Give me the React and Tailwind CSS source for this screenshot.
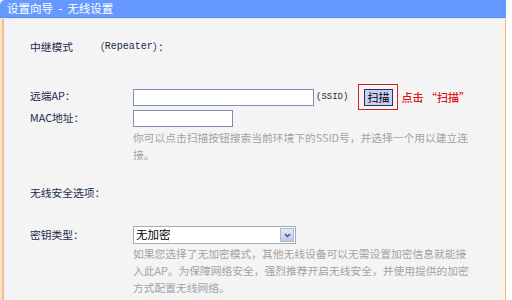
export default function App() {
  const cjk = { fontFamily: '"Noto Sans CJK SC", "Noto Sans", sans-serif' };
  const mono = { fontFamily: '"Liberation Mono", "Noto Sans CJK SC", monospace' };
  return (
    <div className="w-[512px] h-[300px] bg-white flex overflow-hidden" style={cjk}>
      <div className="w-[506px] h-[300px] flex flex-col">
        <div className="h-[18px] bg-[#6699ff] rounded-tl-[5px] border-b border-[#5a8cf0] flex items-center pl-[7px] text-white text-[11.5px] leading-none whitespace-pre">
          {"设置向导  -  无线设置"}
        </div>
        <div className="flex-1 flex bg-[#f4f4f4] border-t border-[#dfe8ff]">
          <div className="w-[2px] bg-[#fbe2c8]" />
          <div className="w-[2px] bg-[#f3bd86]" />
          <div className="w-[8px] bg-[#f1f3f8]" />
          <div className="flex-1 flex flex-col pl-[18px] text-[10.75px] text-[#1c2a4c]">
            <div className="h-[16px] mt-[20px] flex items-center leading-none">
              <span className="w-[64px]">中继模式</span>
              <span>（</span>
              <span className="text-[10px]" style={mono}>Repeater</span>
              <span>）：</span>
            </div>
            <div className="h-[26px] mt-[29px] flex items-center leading-none">
              <span className="w-[103px] mt-[-2px]">远端AP：</span>
              <div className="w-[181px] h-[17px] bg-white border border-[#7d8db5]" />
              <span className="ml-[2px] text-[9px] text-[#1c2a4c]" style={mono}>(SSID)</span>
              <div className="ml-[10px] w-[40px] h-[26px] border border-[#d42020] flex items-center justify-center">
                <div className="w-[29px] h-[17px] bg-[#c9d0f2] border border-[#2b3450] flex items-center justify-center text-[11px] text-black">
                  扫描
                </div>
              </div>
              <span className="ml-[3px] text-[11px] text-[#dc1414] font-medium">点击 “扫描”</span>
            </div>
            <div className="h-[17px] flex items-center leading-none">
              <span className="w-[103px]">MAC地址：</span>
              <div className="w-[100px] h-[17px] bg-white border border-[#7d8db5]" />
            </div>
            <div className="ml-[103px] mt-[2px] text-[#a3a3a3] leading-[17px]">
              <div>你可以点击扫描按钮搜索当前环境下的SSID号，并选择一个用以建立连</div>
              <div>接。</div>
            </div>
            <div className="h-[16px] mt-[22px] flex items-center leading-none">
              <span>无线安全选项：</span>
            </div>
            <div className="h-[18px] mt-[25px] flex items-center leading-none">
              <span className="w-[103px]">密钥类型：</span>
              <div className="w-[163px] h-[18px] bg-white border border-[#a5acb5] flex items-center justify-between">
                <span className="pl-[2px] text-[11.5px] text-black">无加密</span>
                <div className="w-[14px] h-[14px] mr-[1px] bg-gradient-to-b from-[#e3ebf8] to-[#b9c8e4] border border-[#a9b8d4] flex items-center justify-center">
                  <svg width="7" height="5" viewBox="0 0 7 5">
                    <path d="M1 1 L3.5 3.5 L6 1" fill="none" stroke="#3a4d78" strokeWidth="1.4" />
                  </svg>
                </div>
              </div>
            </div>
            <div className="ml-[103px] mt-[1px] text-[#a3a3a3] leading-[17px]">
              <div>如果您选择了无加密模式，其他无线设备可以无需设置加密信息就能接</div>
              <div>入此AP。为保障网络安全，强烈推荐开启无线安全，并使用提供的加密</div>
              <div>方式配置无线网络。</div>
            </div>
          </div>
          <div className="w-[3px] bg-[#fdf2e6]" />
          <div className="w-[1px] bg-[#efb77e]" />
        </div>
      </div>
    </div>
  );
}
